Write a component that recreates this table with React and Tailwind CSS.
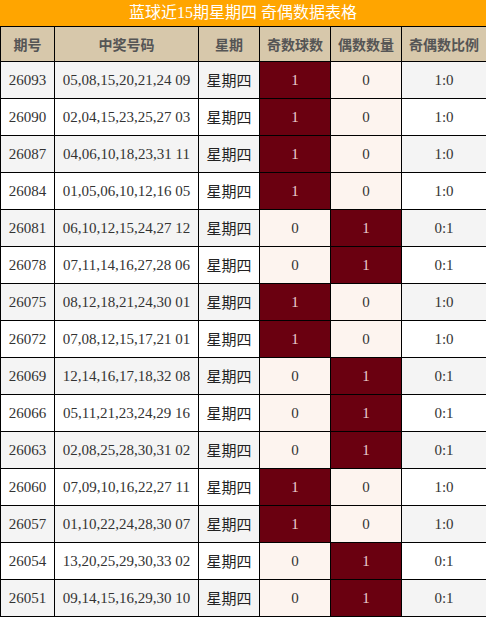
const rows = [
  ['26093', '05,08,15,20,21,24 09', 1],
  ['26090', '02,04,15,23,25,27 03', 1],
  ['26087', '04,06,10,18,23,31 11', 1],
  ['26084', '01,05,06,10,12,16 05', 1],
  ['26081', '06,10,12,15,24,27 12', 0],
  ['26078', '07,11,14,16,27,28 06', 0],
  ['26075', '08,12,18,21,24,30 01', 1],
  ['26072', '07,08,12,15,17,21 01', 1],
  ['26069', '12,14,16,17,18,32 08', 0],
  ['26066', '05,11,21,23,24,29 16', 0],
  ['26063', '02,08,25,28,30,31 02', 0],
  ['26060', '07,09,10,16,22,27 11', 1],
  ['26057', '01,10,22,24,28,30 07', 1],
  ['26054', '13,20,25,29,30,33 02', 0],
  ['26051', '09,14,15,16,29,30 10', 0],
]

const headers = ['期号', '中奖号码', '星期', '奇数球数', '偶数数量', '奇偶数比例']

const OddCell = ({on}) => (
  <td className={`border border-black text-center ${on ? 'bg-[#6a0010] text-[#e9cfcf]' : 'bg-[#fdf4ef] text-[#333]'}`}>
    {on ? 1 : 0}
  </td>
)

const App = () => {
  return (
    <div className="w-[486px] h-[617px] bg-white overflow-hidden" style={{fontFamily: '"Liberation Serif", "Noto Sans CJK SC", serif'}}>
      <div className="h-[26px] bg-[#ffa500] text-white text-[16px] leading-[26px] text-center">
        蓝球近15期星期四 奇偶数据表格
      </div>
      <table className="table-fixed border-collapse w-[486px]">
        <colgroup>
          <col className="w-[54px]" />
          <col className="w-[144px]" />
          <col className="w-[61px]" />
          <col className="w-[71px]" />
          <col className="w-[71px]" />
          <col className="w-[85px]" />
        </colgroup>
        <thead>
          <tr className="h-[35px] bg-[#d7c8ab]">
            {headers.map((h, i) => (
              <th key={`h_${i}`} className="border border-black text-[14px] font-bold text-[#555] text-center p-0 whitespace-nowrap" style={{fontFamily: '"Noto Sans CJK SC", sans-serif'}}>
                {h}
              </th>
            ))}
          </tr>
        </thead>
        <tbody>
          {rows.map(([no, nums, odd], i) => {
            const bg = i % 2 === 0 ? 'bg-[#f4f4f4]' : 'bg-white'
            return (
              <tr key={`r_${i}`} className="h-[37px] text-[15px] text-[#333]">
                <td className={`border border-black text-center p-0 ${bg}`}>{no}</td>
                <td className={`border border-black text-center p-0 whitespace-nowrap ${bg}`}>{nums}</td>
                <td className={`border border-black text-center p-0 text-[#222] ${bg}`} style={{fontFamily: '"Noto Sans CJK SC", sans-serif'}}>星期四</td>
                <OddCell on={odd === 1} />
                <OddCell on={odd === 0} />
                <td className={`border border-black text-center p-0 ${bg}`}>{odd ? '1:0' : '0:1'}</td>
              </tr>
            )
          })}
        </tbody>
      </table>
    </div>
  )
}

export default App
